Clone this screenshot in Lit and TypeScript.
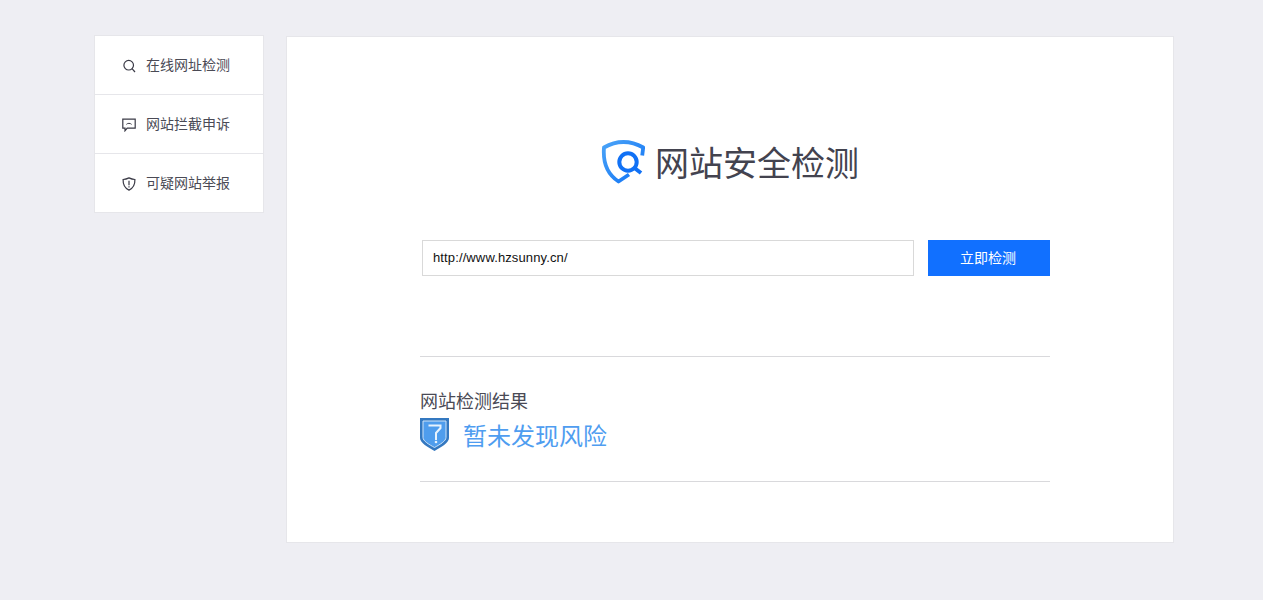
import { LitElement, html, css } from "lit";
import { customElement } from "lit/decorators.js";

@customElement("app-root")
export class AppRoot extends LitElement {
  static styles = css`
    :host { display: block; }
    .page {
      height: 600px; box-sizing: border-box; background: #eeeef3;
      display: flex; align-items: flex-start; gap: 22px;
      padding: 35px 0 0 94px;
      font-family: "Noto Sans CJK SC", "Liberation Sans", sans-serif;
      overflow: hidden;
    }
    .side { width: 170px; box-sizing: border-box; background: #fff; border: 1px solid #e6e6ea; flex: none; }
    .item {
      height: 58px; display: flex; align-items: center; padding-left: 27px;
      font-size: 14px; line-height: 20px; color: #4a4a55; gap: 10px;
    }
    .item + .item { border-top: 1px solid #e6e6ea; }
    .item svg { flex: none; display: block; margin-top: 2px; }
    .item span { margin-bottom: 2px; }
    .card {
      width: 888px; height: 507px; margin-top: 1px; box-sizing: border-box; flex: none;
      background: #fff; border: 1px solid #e6e6ea;
    }
    .title {
      height: 52px; margin-top: 99px; display: flex; justify-content: center; align-items: center; gap: 10px;
      font-size: 34px; line-height: 52px; color: #43434f;
    }
    .title svg { display: block; flex: none; }
    .body { width: 630px; margin-left: 133px; }
    .search { display: flex; margin-top: 52px; padding-left: 2px; gap: 14px; box-sizing: border-box; }
    .input {
      width: 492px; height: 36px; box-sizing: border-box; border: 1px solid #d9d9d9;
      padding: 0 0 2px 10px; display: flex; align-items: center;
      font-family: "Liberation Sans", sans-serif; font-size: 13px; letter-spacing: 0.12px; color: #111;
    }
    .btn {
      width: 122px; height: 36px; box-sizing: border-box; padding: 0 2px 3px 0; background: #1170ff; color: #fff; display: flex;
      align-items: center; justify-content: center; font-size: 14px;
    }
    .result { margin-top: 80px; height: 124px; border-top: 1px solid #d9d9dc; border-bottom: 1px solid #d9d9dc; }
    .rt { margin-top: 31px; font-size: 18px; line-height: 24px; color: #4a4a55; }
    .rv { display: flex; align-items: center; gap: 14px; height: 34px; margin-top: 5px; font-size: 24px; line-height: 34px; color: #4f9df0; }
    .rv svg { display: block; flex: none; }
    .rv span { padding-top: 2px; }
  `;

  render() {
    return html`<div class="page">
      <nav class="side">
        <div class="item">
          <svg width="14" height="14" viewBox="0 0 14 14" fill="none" stroke="#3a3a46" stroke-width="1.2">
            <circle cx="6.700" cy="6.200" r="4.800"/><path d="M10 9.700L13 13"/>
          </svg><span>在线网址检测</span>
        </div>
        <div class="item">
          <svg width="14" height="14" viewBox="0 0 14 14" fill="none" stroke="#3a3a46" stroke-width="1.2">
            <path d="M.8 1.200h12.400v9H5.200L3 12.800v-2.600H.8z"/><path d="M4.400 6.400c1-1.400 4-1.400 5.200 0" stroke-width="1"/>
          </svg><span>网站拦截申诉</span>
        </div>
        <div class="item">
          <svg width="14" height="14" viewBox="0 0 14 14" fill="none" stroke="#3a3a46" stroke-width="1.2">
            <path d="M7 .9c2 1 3.900 1.500 5.900 1.600.2 4.800-1.600 8.600-5.900 10.600C2.700 11.100.9 7.300 1.100 2.500 3.100 2.400 5 1.900 7 .9z"/>
            <path d="M7 3.800v4.400M7 9.200v1.300"/>
          </svg><span>可疑网站举报</span>
        </div>
      </nav>
      <main class="card">
        <div class="title">
          <svg width="44" height="44" viewBox="0 0 44 44" fill="none">
            <defs><linearGradient id="g" x1="0" y1="0" x2="1" y2="1"><stop offset="0" stop-color="#4aa3f7"/><stop offset="1" stop-color="#0f72f5"/></linearGradient></defs>
            <path d="M41.200 15.500L42.200 7.500C36 4 30 2 22.500 2S9 4 3 7.500C1.800 22 6 34 17.500 41.500L28 34.500" stroke="url(#g)" stroke-width="3.800" stroke-linejoin="round"/>
            <circle cx="27" cy="22" r="8.700" stroke="#1171f5" stroke-width="4"/>
            <path d="M33.500 28l6.500 5" stroke="#1171f5" stroke-width="4"/>
          </svg>
          <span>网站安全检测</span>
        </div>
        <div class="body">
          <div class="search">
            <div class="input">http://www.hzsunny.cn/</div>
            <div class="btn">立即检测</div>
          </div>
          <section class="result">
            <div class="rt">网站检测结果</div>
            <div class="rv">
              <svg width="29" height="33" viewBox="0 0 29 33">
                <path d="M0 0h29v20c0 5-8 9-14.500 13C8 29 0 25 0 20z" fill="#3478c0"/>
                <path d="M3 3h23v16.500c0 3.500-6 7-11.500 10C9 26.500 3 23 3 19.500z" fill="#4f9ded" stroke="#cfe4f8" stroke-width="1"/>
                <path d="M8.500 7.500h12v2.500l-4.500 5v7" fill="none" stroke="#e8f3fd" stroke-width="2"/>
                <circle cx="16" cy="24" r="1.300" fill="#e8f3fd"/>
              </svg>
              <span>暂未发现风险</span>
            </div>
          </section>
        </div>
      </main>
    </div>`;
  }
}
